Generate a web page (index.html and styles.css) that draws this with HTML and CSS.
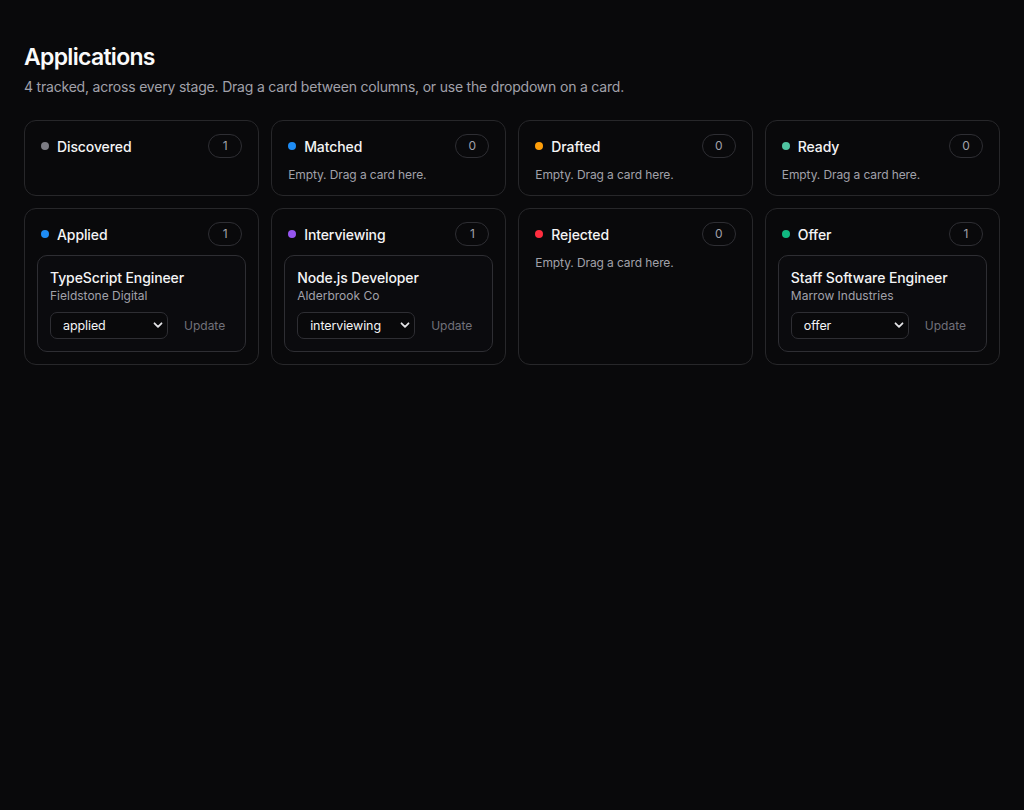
FILE: index.html
```html
<!DOCTYPE html>
<html lang="en">
<head>
<meta charset="utf-8">
<title>Applications</title>
<link rel="stylesheet" href="styles.css">
</head>
<body>
<main class="page">
  <h1 class="title">Applications</h1>
  <p class="subtitle">4 tracked, across every stage. Drag a card between columns, or use the dropdown on a card.</p>
  <div class="board">
    <section class="col">
      <div class="col-head"><span class="dot dot-gray"></span><span class="col-name">Discovered</span><span class="count">1</span></div>
    </section>
    <section class="col">
      <div class="col-head"><span class="dot dot-blue"></span><span class="col-name">Matched</span><span class="count">0</span></div>
      <p class="empty">Empty. Drag a card here.</p>
    </section>
    <section class="col">
      <div class="col-head"><span class="dot dot-orange"></span><span class="col-name">Drafted</span><span class="count">0</span></div>
      <p class="empty">Empty. Drag a card here.</p>
    </section>
    <section class="col">
      <div class="col-head"><span class="dot dot-teal"></span><span class="col-name">Ready</span><span class="count">0</span></div>
      <p class="empty">Empty. Drag a card here.</p>
    </section>

    <section class="col">
      <div class="col-head"><span class="dot dot-blue"></span><span class="col-name">Applied</span><span class="count">1</span></div>
      <article class="card">
        <div class="card-title">TypeScript Engineer</div>
        <div class="card-company">Fieldstone Digital</div>
        <div class="card-actions">
          <div class="select-wrap">
            <select class="stage-select">
              <option>discovered</option><option>matched</option><option>drafted</option><option>ready</option>
              <option selected>applied</option><option>interviewing</option><option>rejected</option><option>offer</option>
            </select>
            <svg class="chev" width="10" height="10" viewBox="0 0 10 10"><path d="M1.5 3.3 L5 6.8 L8.5 3.3" fill="none" stroke="#e4e4e7" stroke-width="1.8" stroke-linecap="round" stroke-linejoin="round"/></svg>
          </div>
          <button class="update">Update</button>
        </div>
      </article>
    </section>
    <section class="col">
      <div class="col-head"><span class="dot dot-purple"></span><span class="col-name">Interviewing</span><span class="count">1</span></div>
      <article class="card">
        <div class="card-title">Node.js Developer</div>
        <div class="card-company">Alderbrook Co</div>
        <div class="card-actions">
          <div class="select-wrap">
            <select class="stage-select">
              <option>discovered</option><option>matched</option><option>drafted</option><option>ready</option>
              <option>applied</option><option selected>interviewing</option><option>rejected</option><option>offer</option>
            </select>
            <svg class="chev" width="10" height="10" viewBox="0 0 10 10"><path d="M1.5 3.3 L5 6.8 L8.5 3.3" fill="none" stroke="#e4e4e7" stroke-width="1.8" stroke-linecap="round" stroke-linejoin="round"/></svg>
          </div>
          <button class="update">Update</button>
        </div>
      </article>
    </section>
    <section class="col">
      <div class="col-head"><span class="dot dot-red"></span><span class="col-name">Rejected</span><span class="count">0</span></div>
      <p class="empty">Empty. Drag a card here.</p>
    </section>
    <section class="col">
      <div class="col-head"><span class="dot dot-green"></span><span class="col-name">Offer</span><span class="count">1</span></div>
      <article class="card">
        <div class="card-title">Staff Software Engineer</div>
        <div class="card-company">Marrow Industries</div>
        <div class="card-actions">
          <div class="select-wrap">
            <select class="stage-select">
              <option>discovered</option><option>matched</option><option>drafted</option><option>ready</option>
              <option>applied</option><option>interviewing</option><option>rejected</option><option selected>offer</option>
            </select>
            <svg class="chev" width="10" height="10" viewBox="0 0 10 10"><path d="M1.5 3.3 L5 6.8 L8.5 3.3" fill="none" stroke="#e4e4e7" stroke-width="1.8" stroke-linecap="round" stroke-linejoin="round"/></svg>
          </div>
          <button class="update">Update</button>
        </div>
      </article>
    </section>
  </div>
</main>
</body>
</html>
```

FILE: styles.css
```css
* { box-sizing: border-box; }
html, body {
  margin: 0;
  background: #09090b;
  color: #fafafa;
  font-family: Inter, "Noto Sans", "Liberation Sans", sans-serif;
}
.page {
  padding: 42px 24px 24px;
}
.title {
  margin: 0;
  font-size: 23px;
  line-height: 30px;
  font-weight: 600;
  letter-spacing: -0.7px;
  color: #fafafa;
}
.subtitle {
  margin: 5px 0 0;
  font-size: 14px;
  line-height: 20px;
  letter-spacing: -0.2px;
  color: #a1a1aa;
}
.board {
  margin-top: 23px;
  display: grid;
  grid-template-columns: repeat(4, 1fr);
  gap: 12px;
  align-items: start;
}
.col {
  border: 1px solid #27272a;
  border-radius: 12px;
  padding: 12px;
  background: #09090b;
  display: flex;
  flex-direction: column;
  gap: 8px;
  align-self: stretch;
}
.col-head {
  display: flex;
  align-items: center;
  padding: 1px 4px;
  height: 26px;
}
.dot {
  width: 8px;
  height: 8px;
  border-radius: 50%;
  margin-right: 8px;
  flex: none;
}
.dot-gray { background: #7c7c84; }
.dot-blue { background: #1e8cf5; }
.dot-orange { background: #ff9f0a; }
.dot-teal { background: #4fc3a1; }
.dot-purple { background: #9655f0; }
.dot-red { background: #ff2d3f; }
.dot-green { background: #10b981; }
.col-name {
  font-size: 14px;
  font-weight: 450;
  letter-spacing: -0.1px;
  color: #f4f4f5;
  flex: 1;
}
.count {
  min-width: 34px;
  height: 24px;
  padding: 0 10px;
  border: 1px solid #2e2e33;
  border-radius: 12px;
  font-size: 12px;
  line-height: 22px;
  text-align: center;
  color: #a1a1aa;
}
.empty {
  margin: 0;
  padding: 0 4px;
  font-size: 12px;
  line-height: 16px;
  letter-spacing: -0.1px;
  color: #a1a1aa;
}
.card {
  border: 1px solid #2e2e33;
  border-radius: 10px;
  padding: 12px;
  background: #0b0b0e;
}
.card-title {
  font-size: 14px;
  line-height: 20px;
  font-weight: 450;
  letter-spacing: -0.1px;
  color: #f4f4f5;
}
.card-company {
  font-size: 12px;
  line-height: 16px;
  color: #a1a1aa;
}
.card-actions {
  margin-top: 8px;
  display: flex;
  align-items: center;
  gap: 8px;
}
.select-wrap {
  position: relative;
  width: 118px;
  height: 27px;
}
.stage-select {
  -webkit-appearance: none;
  appearance: none;
  width: 100%;
  height: 100%;
  border: 1px solid #2e2e33;
  border-radius: 7px;
  background: #09090b;
  color: #f4f4f5;
  font-family: Inter, "Noto Sans", "Liberation Sans", sans-serif;
  font-size: 12.5px;
  letter-spacing: -0.1px;
  padding: 0 24px 0 12px;
  outline: none;
}
.chev {
  position: absolute;
  right: 5px;
  top: 8px;
  pointer-events: none;
}
.update {
  border: none;
  background: transparent;
  color: #71717a;
  font-family: Inter, "Noto Sans", "Liberation Sans", sans-serif;
  font-size: 12px;
  padding: 4px 8px;
  cursor: pointer;
}
```
